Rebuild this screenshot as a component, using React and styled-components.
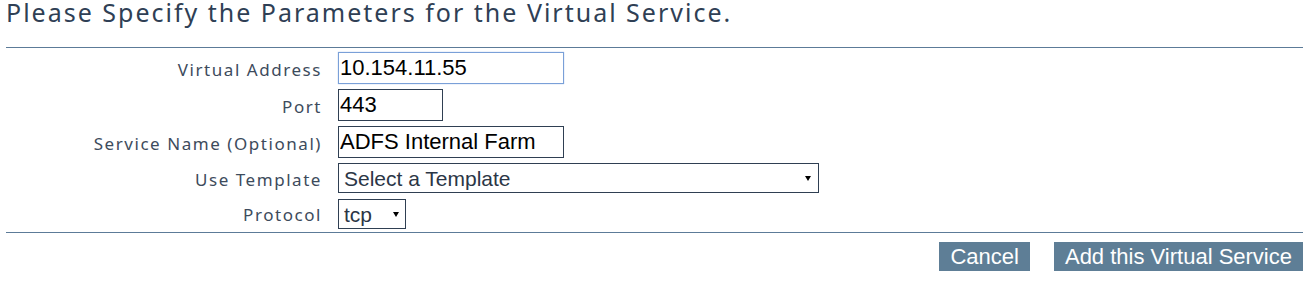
import React from "react";
import styled, { createGlobalStyle, css } from "styled-components";

const GlobalStyle = createGlobalStyle`
  body {
    margin: 0;
    background: #ffffff;
  }
`;

const Page = styled.div`
  padding: 0 7px 0 6px;
  font-family: "Noto Sans", "Open Sans", sans-serif;
`;

const Title = styled.h1`
  margin: 0;
  font-size: 25px;
  font-weight: 400;
  line-height: 25px;
  color: #2f3f55;
  letter-spacing: 2px;
`;

const Rule = styled.hr`
  border: none;
  border-top: 1px solid #5c7b98;
  margin: ${p => p.$top}px 0 0 0;
  height: 0;
`;

const Form = styled.div`
  display: grid;
  grid-template-columns: 316px 1fr;
  column-gap: 16px;
  padding-top: 4px;
`;

const Label = styled.label`
  justify-self: end;
  align-self: center;
  padding-bottom: 3px;
  font-size: 17px;
  color: #3d4b5c;
  letter-spacing: 1.55px;
`;

const Field = styled.div`
  display: flex;
  margin-bottom: ${p => p.$gap}px;
`;

const fieldBox = css`
  box-sizing: border-box;
  border: 1px solid #2f3f52;
  border-radius: 0;
  background: #fff;
  font-family: "Liberation Sans", Arial, sans-serif;
  outline: none;
  margin: 0;
`;

const TextInput = styled.input`
  ${fieldBox}
  width: ${p => p.$w}px;
  height: 32px;
  padding: 0 1px;
  font-size: 22px;
  color: #000;
  ${p =>
    p.$focused &&
    css`
      border-color: #7aa0d8;
      box-shadow: 0 0 1px #9bb8e4;
    `}
`;

const SelectWrap = styled.span`
  position: relative;
  display: inline-block;
  width: ${p => p.$w}px;

  &::after {
    content: "";
    position: absolute;
    right: ${p => p.$arrowRight}px;
    top: 50%;
    margin-top: -2px;
    border-left: 3px solid transparent;
    border-right: 3px solid transparent;
    border-top: 5px solid #000;
    pointer-events: none;
  }
`;

const Select = styled.select`
  ${fieldBox}
  appearance: none;
  -webkit-appearance: none;
  width: 100%;
  height: 30px;
  padding: 0 20px 0 5px;
  font-size: 21px;
  color: #2b3646;
`;

const Actions = styled.div`
  display: flex;
  justify-content: flex-end;
  gap: 24px;
  margin-top: 9px;
`;

const Button = styled.button`
  border: none;
  border-radius: 0;
  background: #5e7e96;
  color: #fff;
  height: 29px;
  padding: 0 11px;
  font-family: "Liberation Sans", Arial, sans-serif;
  font-size: 22px;
  line-height: 29px;
  cursor: pointer;
`;

export default function App() {
  return (
    <Page>
      <GlobalStyle />
      <Title>Please Specify the Parameters for the Virtual Service.</Title>
      <Rule $top={22} />
      <Form>
        <Label>Virtual Address</Label>
        <Field $gap={5}>
          <TextInput $w={226} $focused defaultValue="10.154.11.55" />
        </Field>

        <Label>Port</Label>
        <Field $gap={5}>
          <TextInput $w={105} defaultValue="443" />
        </Field>

        <Label>Service Name (Optional)</Label>
        <Field $gap={5}>
          <TextInput $w={226} defaultValue="ADFS Internal Farm" />
        </Field>

        <Label>Use Template</Label>
        <Field $gap={6}>
          <SelectWrap $w={481} $arrowRight={8}>
            <Select defaultValue="">
              <option value="">Select a Template</option>
            </Select>
          </SelectWrap>
        </Field>

        <Label>Protocol</Label>
        <Field $gap={3}>
          <SelectWrap $w={68} $arrowRight={7}>
            <Select defaultValue="tcp">
              <option value="tcp">tcp</option>
              <option value="udp">udp</option>
            </Select>
          </SelectWrap>
        </Field>
      </Form>
      <Rule $top={0} />
      <Actions>
        <Button>Cancel</Button>
        <Button>Add this Virtual Service</Button>
      </Actions>
    </Page>
  );
}
